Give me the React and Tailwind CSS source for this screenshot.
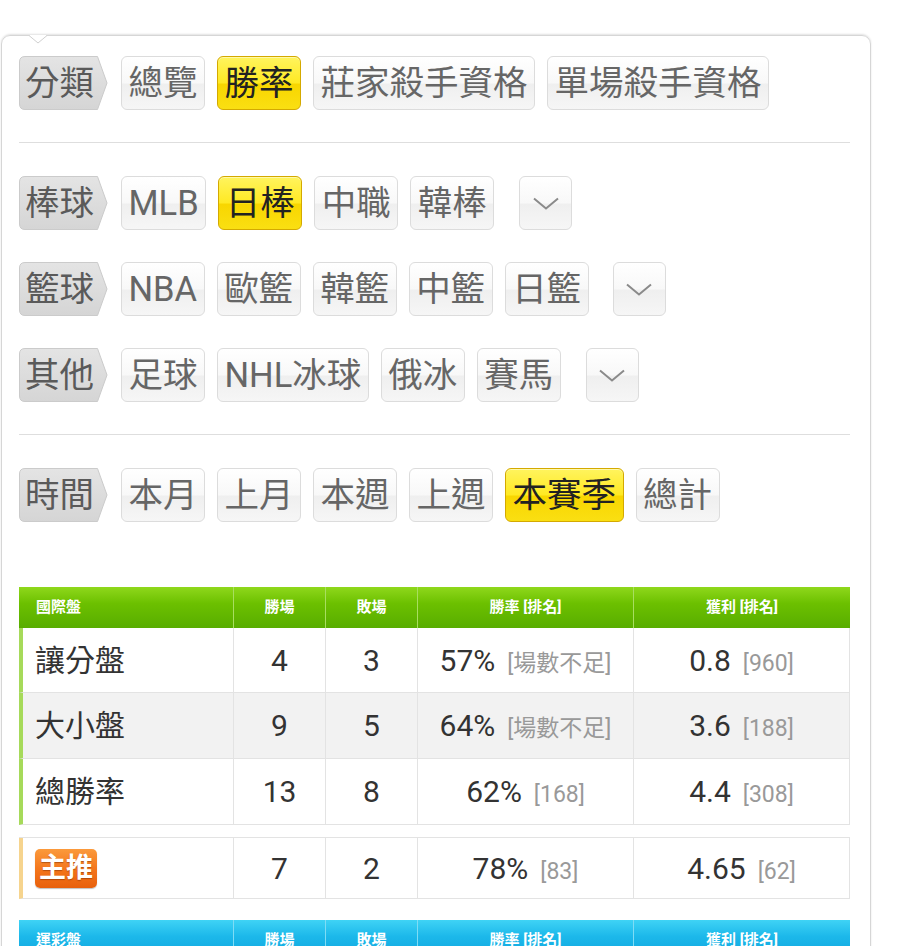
import React from "react";

const FONT = { fontFamily: 'Roboto, "Noto Sans CJK TC", "Noto Sans", sans-serif' };

function Tag({ text }) {
  return (
    <div className="relative w-[89px] h-[54px] shrink-0 flex items-center pl-[6px]">
      <svg className="absolute inset-0" width="89" height="54" viewBox="0 0 89 54">
        <defs>
          <linearGradient id="tg" x1="0" y1="0" x2="0" y2="1">
            <stop offset="0" stopColor="#e4e4e4" />
            <stop offset="1" stopColor="#d5d5d5" />
          </linearGradient>
        </defs>
        <path d="M6 0.5 H78.5 L88 27 L78.5 53.5 H6 Q0.5 53.5 0.5 48 V6 Q0.5 0.5 6 0.5 Z" fill="url(#tg)" stroke="#cbcbcb" strokeWidth="1" />
      </svg>
      <span className="relative text-[34.5px] leading-none text-[#5a5a5a]">{text}</span>
    </div>
  );
}

function Btn({ text, active }) {
  return (
    <div
      className={
        "h-[54px] shrink-0 flex items-center px-[6.5px] rounded-[6px] border text-[34.5px] leading-none " +
        (active
          ? "border-[#d4a900] text-[#222] bg-[linear-gradient(to_bottom,#fff45e_0%,#ffe923_50%,#f8d600_52%,#fadf12_100%)] shadow-[inset_0_1px_0_#fff9a8]"
          : "border-[#dcdcdc] text-[#666] bg-[linear-gradient(to_bottom,#ffffff_0%,#f8f8f8_50%,#efefef_52%,#f6f6f6_100%)]")
      }
    >
      {text}
    </div>
  );
}

function Drop({ ml }) {
  return (
    <div className={"h-[54px] w-[53px] shrink-0 flex items-center justify-center rounded-[6px] border border-[#dcdcdc] bg-[linear-gradient(to_bottom,#ffffff_0%,#f8f8f8_50%,#efefef_52%,#f6f6f6_100%)] " + ml}>
      <svg width="26" height="13" viewBox="0 0 26 13">
        <polyline points="1,1.5 13,11.5 25,1.5" fill="none" stroke="#8a8a8a" strokeWidth="2" />
      </svg>
    </div>
  );
}

function Row({ label, children }) {
  return (
    <div className="flex items-center">
      <Tag text={label} />
      <div className="flex items-center gap-[12px] ml-[13px]">{children}</div>
    </div>
  );
}

const COLS = "grid grid-cols-[214px_92px_92px_216px_217px]";

function Header({ title, blue }) {
  const bg = blue
    ? "bg-[linear-gradient(to_bottom,#3fd3f5_0%,#1cb8ea_40%,#0fa3dd_100%)]"
    : "bg-[linear-gradient(to_bottom,#8fd81c_0%,#6cc000_40%,#58ad00_100%)]";
  const sep = blue ? "border-[#7fdcf5]" : "border-[#a8de60]";
  const cells = ["勝場", "敗場", "勝率 [排名]", "獲利 [排名]"];
  return (
    <div className={COLS + " h-[41px] text-white font-bold text-[15px] " + bg}>
      <div className="flex items-center pl-[17px]">{title}</div>
      {cells.map((c) => (
        <div key={c} className={"flex items-center justify-center border-l " + sep}>{c}</div>
      ))}
    </div>
  );
}

function Cell({ children, first, className = "" }) {
  return (
    <div className={"flex items-center border-b border-[#e3e3e3] " + (first ? "" : "justify-center border-l ") + className}>
      {children}
    </div>
  );
}

function Val({ v, r }) {
  return (
    <span className="flex items-baseline">
      <span className="text-[30px] text-[#333]">{v}</span>
      <span className="text-[23px] text-[#999] ml-[12px]">{r}</span>
    </span>
  );
}

function DataRow({ name, w, l, rate, rr, prof, pr, bg, accent, h = "h-[66px]" }) {
  return (
    <div className={COLS + " " + h + " " + bg}>
      <Cell first className={"border-l-[4px] pl-[12px] " + accent}>
        {name}
      </Cell>
      <Cell><span className="text-[30px] text-[#333]">{w}</span></Cell>
      <Cell><span className="text-[30px] text-[#333]">{l}</span></Cell>
      <Cell><Val v={rate} r={rr} /></Cell>
      <Cell className="border-r"><Val v={prof} r={pr} /></Cell>
    </div>
  );
}

export default function App() {
  return (
    <div className="w-[903px] h-[946px] overflow-hidden bg-white" style={FONT}>
      <div className="h-[35px]" />
      <div className="relative ml-[1px] w-[870px] rounded-t-[9px] border border-[#d6d6d6] shadow-[0_-1px_2px_rgba(0,0,0,0.12)] pl-[17px] pr-[19px] pt-[20px] pb-[40px]">
        <svg className="absolute left-[27px] -top-[1px]" width="18" height="9" viewBox="0 0 18 9">
          <polygon points="0,0 18,0 9,8" fill="#ffffff" />
          <polyline points="0,0.5 9,8 18,0.5" fill="none" stroke="#d0d0d0" strokeWidth="1" />
        </svg>

        <Row label="分類">
          <Btn text="總覽" />
          <Btn text="勝率" active />
          <Btn text="莊家殺手資格" />
          <Btn text="單場殺手資格" />
        </Row>

        <div className="mt-[32px] h-px bg-[#dedede] w-[831px]" />

        <div className="mt-[33px] flex flex-col gap-[32px]">
          <Row label="棒球">
            <Btn text="MLB" />
            <Btn text="日棒" active />
            <Btn text="中職" />
            <Btn text="韓棒" />
            <Drop ml="ml-[13px]" />
          </Row>
          <Row label="籃球">
            <Btn text="NBA" />
            <Btn text="歐籃" />
            <Btn text="韓籃" />
            <Btn text="中籃" />
            <Btn text="日籃" />
            <Drop ml="ml-[12px]" />
          </Row>
          <Row label="其他">
            <Btn text="足球" />
            <Btn text="NHL冰球" />
            <Btn text="俄冰" />
            <Btn text="賽馬" />
            <Drop ml="ml-[13px]" />
          </Row>
        </div>

        <div className="mt-[32px] h-px bg-[#dedede] w-[831px]" />

        <div className="mt-[33px]">
          <Row label="時間">
            <Btn text="本月" />
            <Btn text="上月" />
            <Btn text="本週" />
            <Btn text="上週" />
            <Btn text="本賽季" active />
            <Btn text="總計" />
          </Row>
        </div>

        <div className="mt-[65px] w-[831px]">
          <Header title="國際盤" />
          <div className="text-[30px] text-[#333]">
            <DataRow name="讓分盤" w="4" l="3" rate="57%" rr="[場數不足]" prof="0.8" pr="[960]" bg="bg-white" accent="border-l-[#a6da5a]" h="h-[65px]" />
            <DataRow name="大小盤" w="9" l="5" rate="64%" rr="[場數不足]" prof="3.6" pr="[188]" bg="bg-[#f2f2f2]" accent="border-l-[#a6da5a]" />
            <DataRow name="總勝率" w="13" l="8" rate="62%" rr="[168]" prof="4.4" pr="[308]" bg="bg-white" accent="border-l-[#a6da5a]" />
          </div>
          <div className="mt-[12px] border-t border-[#e3e3e3]">
            <DataRow
              name={
                <span className="inline-flex items-center justify-center w-[62px] h-[39px] rounded-[5px] bg-[linear-gradient(to_bottom,#fb9a3c_0%,#f3741a_55%,#e8600c_100%)] text-white font-bold text-[27px] shadow-[0_1px_1px_rgba(0,0,0,0.25)] [text-shadow:0_1px_1px_rgba(120,40,0,0.5)]">
                  主推
                </span>
              }
              w="7" l="2" rate="78%" rr="[83]" prof="4.65" pr="[62]" bg="bg-white" accent="border-l-[#f6d48e]" h="h-[61px]"
            />
          </div>
          <div className="mt-[21px]">
            <Header title="運彩盤" blue />
          </div>
        </div>
      </div>
    </div>
  );
}
